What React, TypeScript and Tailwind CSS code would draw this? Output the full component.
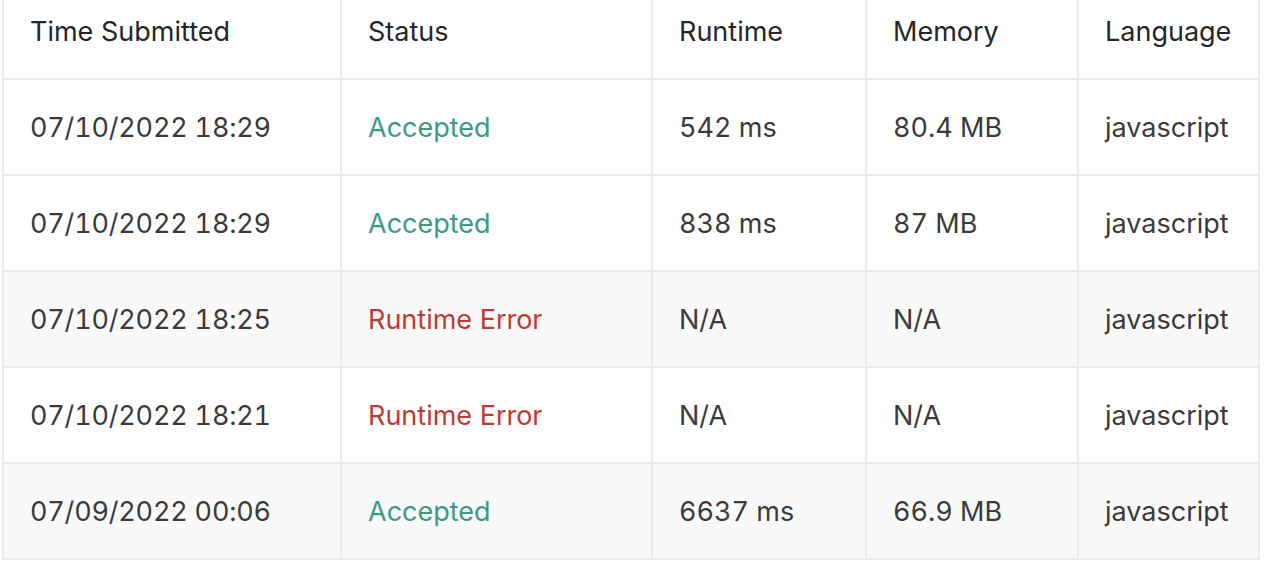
const columns = [
  { label: "Time Submitted", width: "w-[340px]" },
  { label: "Status", width: "w-[311px]" },
  { label: "Runtime", width: "w-[214px]" },
  { label: "Memory", width: "w-[212px]" },
  { label: "Language", width: "w-[181px]" },
];

const submissions = [
  { time: "07/10/2022 18:29", status: "Accepted", runtime: "542 ms", memory: "80.4 MB", lang: "javascript" },
  { time: "07/10/2022 18:29", status: "Accepted", runtime: "838 ms", memory: "87 MB", lang: "javascript" },
  { time: "07/10/2022 18:25", status: "Runtime Error", runtime: "N/A", memory: "N/A", lang: "javascript" },
  { time: "07/10/2022 18:21", status: "Runtime Error", runtime: "N/A", memory: "N/A", lang: "javascript" },
  { time: "07/09/2022 00:06", status: "Accepted", runtime: "6637 ms", memory: "66.9 MB", lang: "javascript" },
];

const cell = "h-[96px] border-r-2 border-b-2 border-[#ebebeb] pl-[26px] pt-[2px] text-left align-middle font-normal first:border-l-2";

export default function App() {
  return (
    <div className="h-[562px] w-[1276px] overflow-hidden bg-white font-['Inter','Noto_Sans',sans-serif] text-[27px]">
      <table className="-mt-[18px] ml-[2px] table-fixed border-separate border-spacing-0">
        <thead>
          <tr>
            {columns.map((c) => (
              <th
                key={c.label}
                className={`${cell} ${c.width} h-[98px] border-t-2 text-[#262626]`}
              >
                {c.label}
              </th>
            ))}
          </tr>
        </thead>
        <tbody className="text-[#3b3b3b]">
          {submissions.map((s, i) => (
            <tr key={i} className={i === 2 || i === 4 ? "bg-[#f9f9f9]" : "bg-white"}>
              <td className={`${cell} tabular-nums tracking-[-0.2px]`}>{s.time}</td>
              <td
                className={`${cell} ${
                  s.status === "Accepted" ? "text-[#3c9a82]" : "text-[#bf3a33]"
                }`}
              >
                {s.status}
              </td>
              <td className={`${cell} tabular-nums`}>{s.runtime}</td>
              <td className={`${cell} tabular-nums`}>{s.memory}</td>
              <td className={cell}>{s.lang}</td>
            </tr>
          ))}
        </tbody>
      </table>
    </div>
  );
}
